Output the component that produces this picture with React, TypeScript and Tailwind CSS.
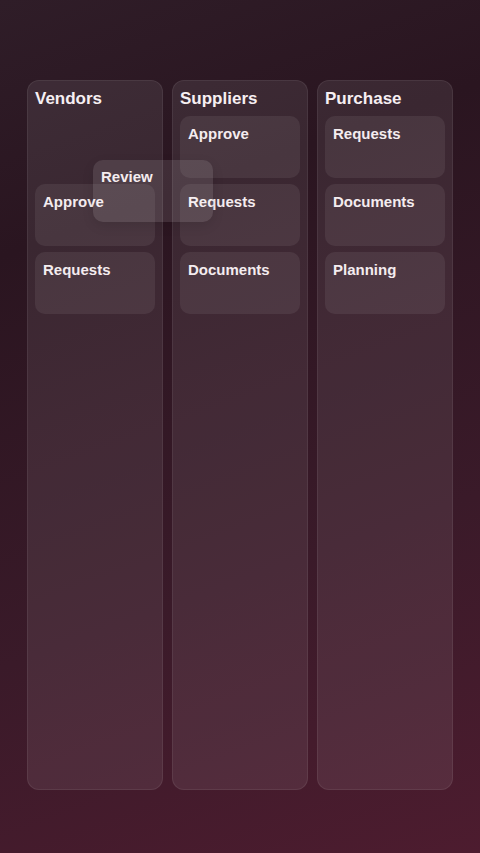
import React from "react";

const font = { fontFamily: '"Liberation Sans", Arial, sans-serif' };

function Card({ label }: { label: string }) {
  return (
    <div className="h-[62px] rounded-[10px] bg-white/[0.07] px-2 pt-[8px] text-[15px] font-bold leading-[20px] text-[#f4ecef]">
      {label}
    </div>
  );
}

function Column({ title, cards, spacer }: { title: string; cards: string[]; spacer?: boolean }) {
  return (
    <div className="flex flex-1 flex-col rounded-xl border border-white/[0.07] bg-white/[0.08] px-[7px] pt-[8px]">
      <div className="mb-[7px] text-[17px] font-bold leading-[20px] text-[#f6eff2]">{title}</div>
      <div className="flex flex-col gap-[6px]">
        {spacer && <div className="h-[62px]" />}
        {cards.map((c) => (
          <Card key={c} label={c} />
        ))}
      </div>
    </div>
  );
}

export default function App() {
  return (
    <div
      className="relative h-[853px] w-[480px] overflow-hidden bg-[linear-gradient(160deg,#2f1d28_0%,#2a1520_25%,#3a1a29_65%,#4d1c2f_100%)]"
      style={font}
    >
      <div className="flex h-[790px] gap-[9px] px-[27px] pt-[80px]">
        <Column title="Vendors" cards={["Approve", "Requests"]} spacer />
        <Column title="Suppliers" cards={["Approve", "Requests", "Documents"]} />
        <Column title="Purchase" cards={["Requests", "Documents", "Planning"]} />
      </div>
      <div className="absolute left-[93px] top-[160px] h-[62px] w-[120px] rounded-[10px] bg-white/[0.1] px-2 pt-[7px] text-[15px] font-bold leading-[20px] text-[#f4ecef] shadow-[0_4px_12px_rgba(0,0,0,0.1)]">
        Review
      </div>
    </div>
  );
}
